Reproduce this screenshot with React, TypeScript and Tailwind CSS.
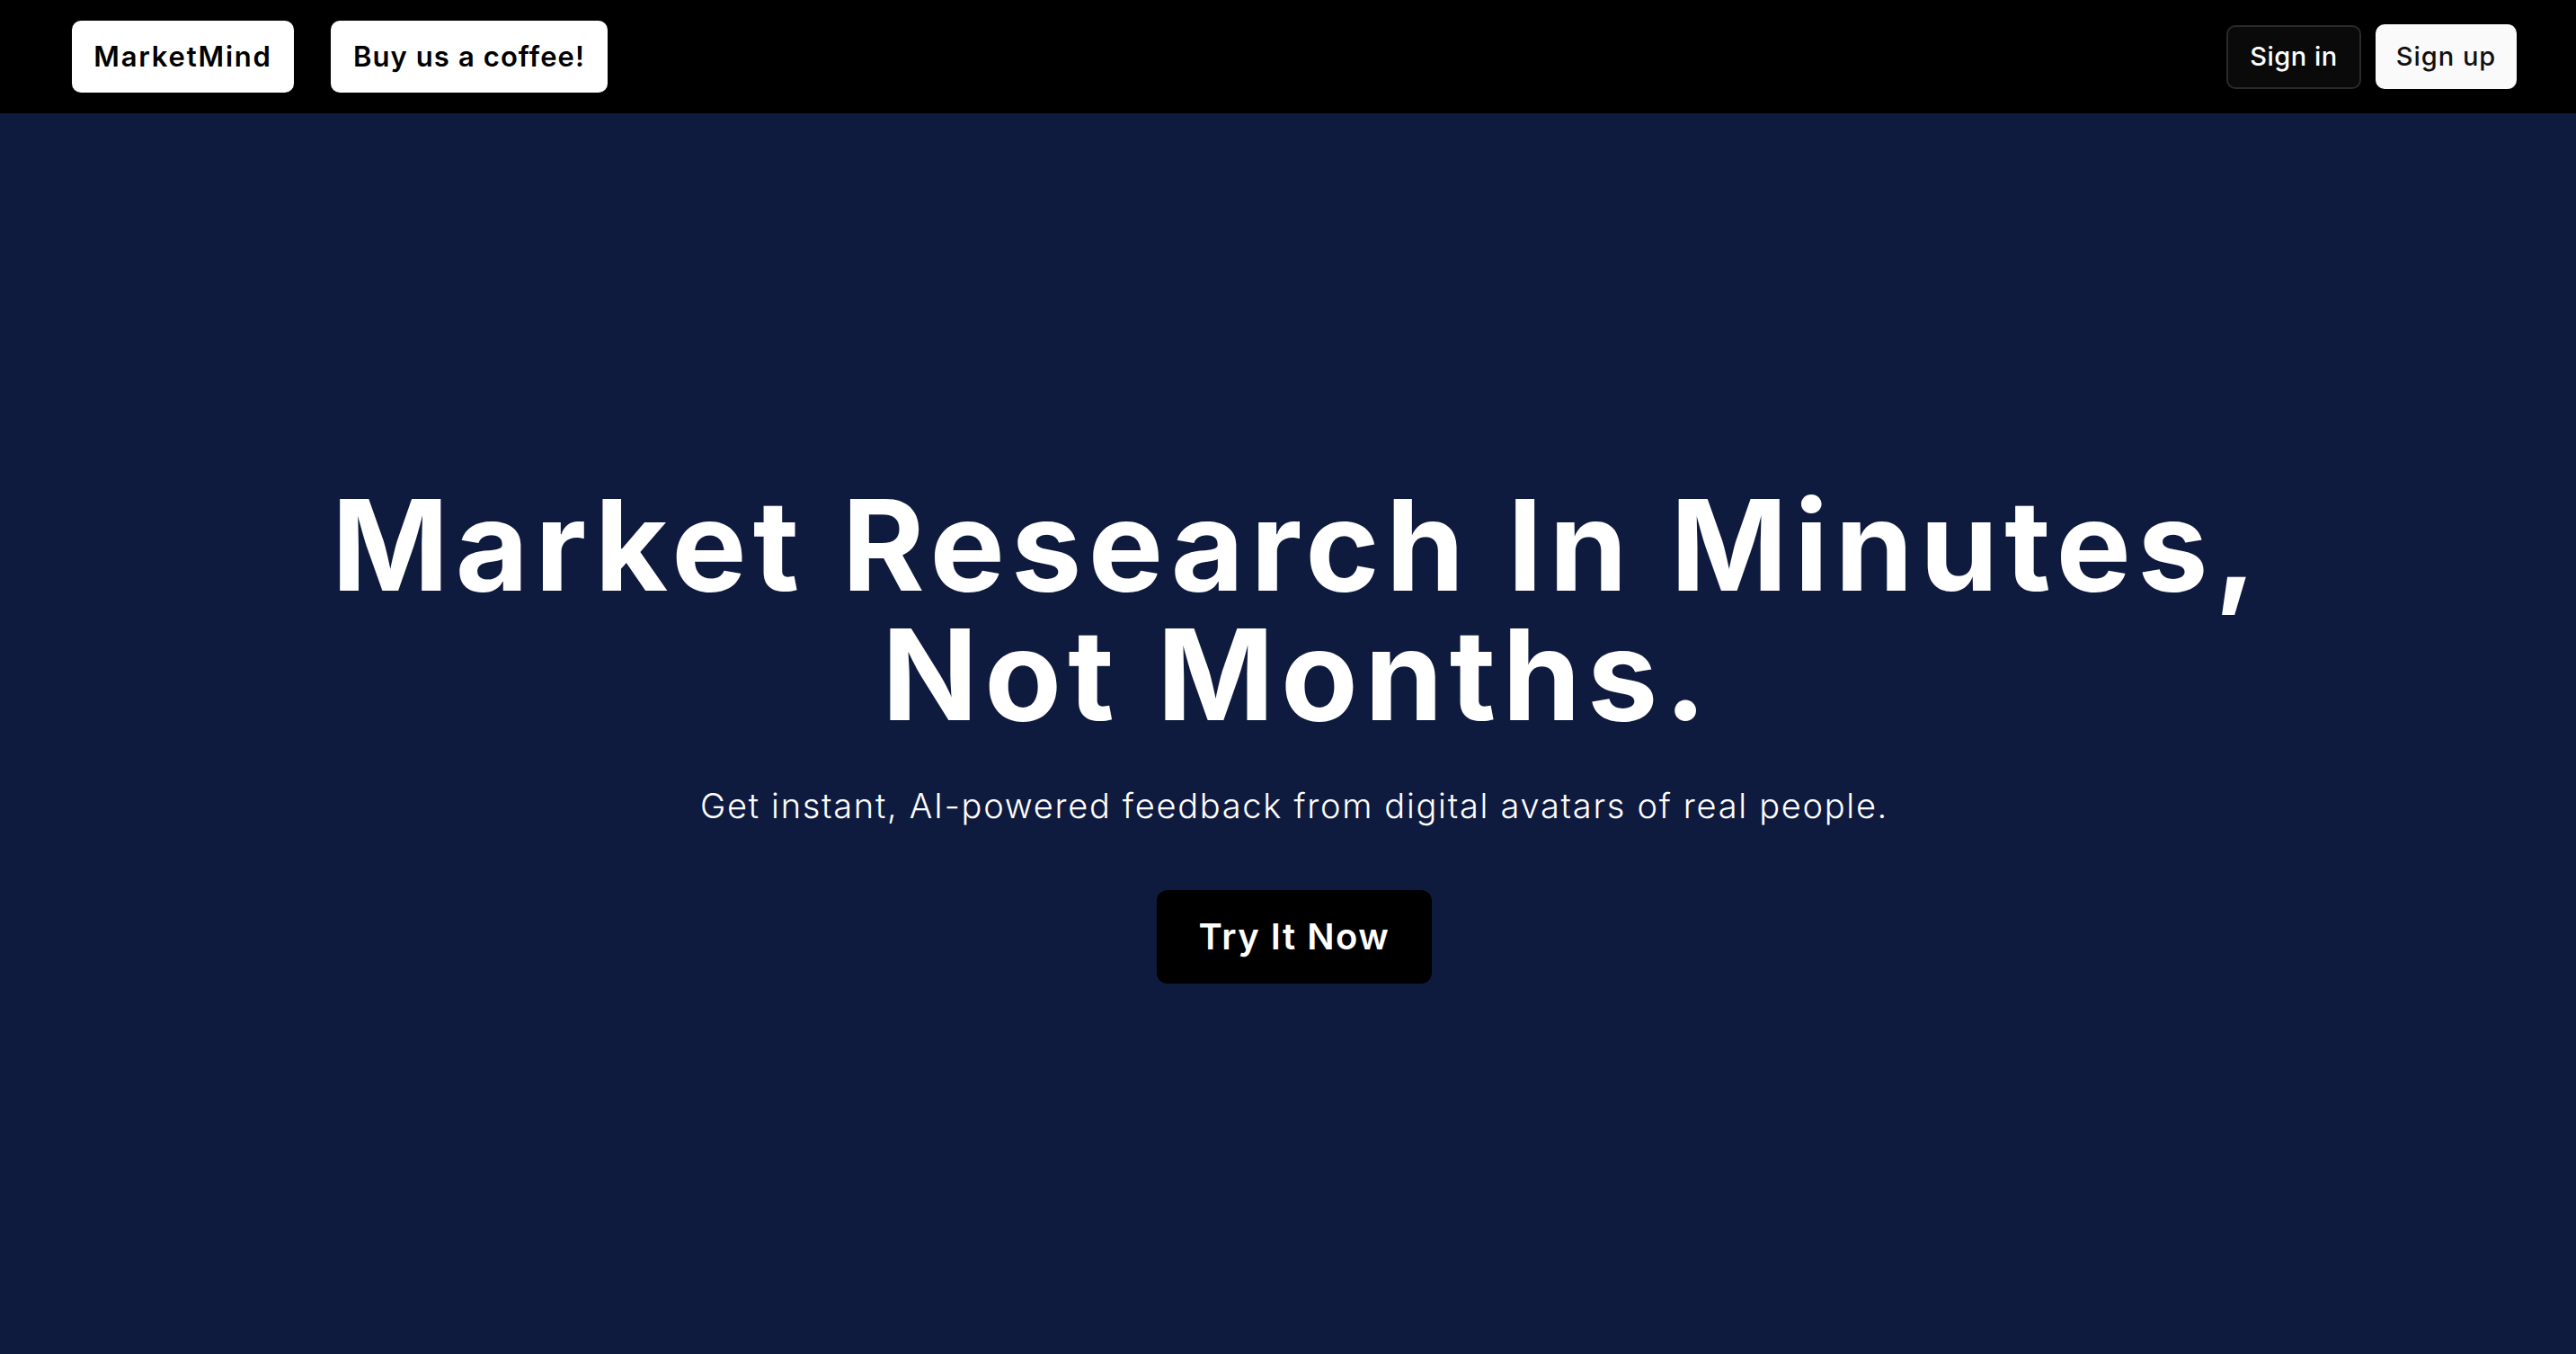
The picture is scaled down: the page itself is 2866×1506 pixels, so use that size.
import React from "react";

export default function App() {
  const font = { fontFamily: "Inter, 'Noto Sans', sans-serif" };
  return (
    <div className="flex h-screen flex-col bg-[#0f1b3e]" style={font}>
      <header className="flex h-[126px] shrink-0 items-center justify-between bg-black pl-[80px] pr-[66px]">
        <div className="flex items-center gap-[41px]">
          <button className="flex h-[80px] w-[247px] items-center justify-center rounded-[10px] bg-white text-[31px] font-semibold tracking-[1.8px] text-black">
            MarketMind
          </button>
          <button className="flex h-[80px] w-[308px] items-center justify-center rounded-[10px] bg-white text-[31px] font-semibold tracking-[1.1px] text-black">
            Buy us a coffee!
          </button>
        </div>
        <div className="flex items-center gap-[16px]">
          <button className="flex h-[71px] w-[150px] items-center justify-center rounded-[10px] border-2 border-[#2a2a2a] bg-[#0a0a0a] text-[29px] font-medium tracking-[0.5px] text-white">
            Sign in
          </button>
          <button className="flex h-[72px] w-[157px] items-center justify-center rounded-[10px] bg-[#fafafa] text-[29px] font-medium tracking-[1px] text-[#111]">
            Sign up
          </button>
        </div>
      </header>
      <main className="flex flex-1 flex-col items-center justify-center pb-[4px] pl-[14px]">
        <h1 className="pl-[7px] text-center text-[140px] font-bold leading-[144px] tracking-[7.3px] text-white">
          <span className="block">Market Research In Minutes,</span>
          <span className="block">Not Months.</span>
        </h1>
        <p className="mt-[46px] text-[38px] font-light tracking-[1.7px] text-white">
          Get instant, AI-powered feedback from digital avatars of real people.
        </p>
        <button className="mt-[65px] flex h-[104px] w-[306px] items-center justify-center rounded-[12px] bg-black text-[40px] font-semibold tracking-[1.5px] text-white">
          Try It Now
        </button>
      </main>
    </div>
  );
}
